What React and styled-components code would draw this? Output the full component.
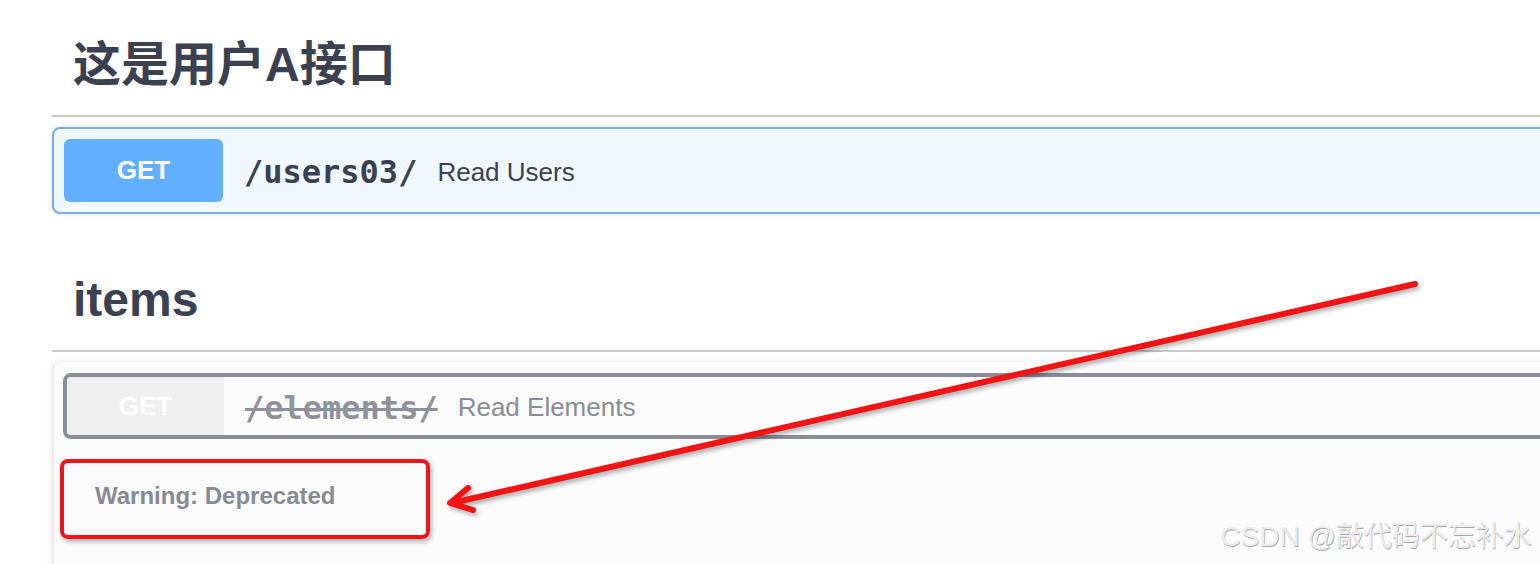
import React from "react";
import styled, { createGlobalStyle } from "styled-components";

const GlobalStyle = createGlobalStyle`
  html, body {
    margin: 0;
    padding: 0;
    background: #fff;
  }
  body {
    overflow: hidden;
    font-family: "Liberation Sans", "Noto Sans CJK SC", sans-serif;
    color: #3b4151;
  }
`;

const Page = styled.div`
  position: relative;
  width: 1540px;
  height: 564px;
  overflow: hidden;
  padding: 16px 0 0 52px;
  box-sizing: border-box;
`;

const Tag = styled.section`
  margin-right: -30px;
  margin-bottom: ${(p) => p.gap || 0}px;
`;

const TagTitle = styled.h3`
  margin: 0 0 10px;
  padding: 20px 40px 21px 21px;
  font-size: 48px;
  line-height: 58px;
  font-weight: 700;
  color: #3b4151;
  border-bottom: 2px solid #c9cacd;
`;

const Opblock = styled.div`
  border: 2px solid #79aee0;
  border-radius: 8px;
  background: #eff7ff;
  box-shadow: 0 0 6px rgba(0, 0, 0, 0.12);
  padding: 10px;
`;

const Summary = styled.div`
  display: flex;
  align-items: center;
`;

const Method = styled.span`
  flex: none;
  display: flex;
  align-items: center;
  justify-content: center;
  width: ${(p) => p.w || 159}px;
  height: ${(p) => p.h || 63}px;
  border-radius: ${(p) => (p.flat ? 0 : 6)}px;
  background: ${(p) => p.bg || "#61affe"};
  color: #fff;
  font-size: 26px;
  font-weight: 700;
`;

const Path = styled.span`
  margin-left: 21px;
  padding-top: 3px;
  font-family: "DejaVu Sans Mono", "Liberation Mono", monospace;
  font-size: 32px;
  font-weight: 700;
  color: ${(p) => p.color || "#3b4151"};
  text-decoration: ${(p) => (p.deprecated ? "line-through" : "none")};
  text-decoration-thickness: 3px;
`;

const Description = styled.span`
  margin-left: 20px;
  padding-top: 3px;
  font-size: 26px;
  color: ${(p) => p.color || "#3b4151"};
`;

const DeprecatedBlock = styled.div`
  border-left: 2px solid #ececec;
  border-radius: 8px 0 0 0;
  background: #fbfbfb;
  box-shadow: 0 0 6px rgba(0, 0, 0, 0.1);
  padding: 11px 0 40px 0;
`;

const DeprecatedSummary = styled.div`
  display: flex;
  align-items: center;
  height: 66px;
  box-sizing: border-box;
  margin-left: 9px;
  border: 4px solid #8a8c96;
  border-radius: 8px;
  background: #fcfcfc;
  overflow: hidden;
`;

const DeprecatedBody = styled.div`
  padding: 20px 0 0 6px;
`;

const WarningBox = styled.div`
  display: flex;
  align-items: center;
  box-sizing: border-box;
  width: 370px;
  height: 80px;
  padding: 0 0 6px 31px;
  border: 4px solid #f0141a;
  border-radius: 8px;
  box-shadow: 2px 3px 5px rgba(0, 0, 0, 0.28);
`;

const WarningText = styled.h4`
  margin: 0;
  font-size: 24px;
  font-weight: 700;
  color: #878a93;
`;

const Arrow = styled.svg`
  position: absolute;
  left: 0;
  top: 0;
  pointer-events: none;
  filter: drop-shadow(2px 3px 2px rgba(0, 0, 0, 0.3));
`;

const Watermark = styled.div`
  position: absolute;
  right: 8px;
  bottom: 10px;
  font-size: 28px;
  font-weight: 400;
  color: #ececec;
  text-shadow: 0.6px 0.6px 0 #a9a9a9;
  white-space: nowrap;
`;

const gray = "#898c96";

const App = () => (
  <>
    <GlobalStyle />
    <Page>
      <Tag gap={37}>
        <TagTitle>这是用户A接口</TagTitle>
        <Opblock>
          <Summary>
            <Method>GET</Method>
            <Path>/users03/</Path>
            <Description>Read Users</Description>
          </Summary>
        </Opblock>
      </Tag>

      <Tag>
        <TagTitle>items</TagTitle>
        <DeprecatedBlock>
          <DeprecatedSummary>
            <Method w={157} h={58} flat bg="#efefef">
              GET
            </Method>
            <Path deprecated color="#8f929b">
              /elements/
            </Path>
            <Description color={gray}>Read Elements</Description>
          </DeprecatedSummary>
          <DeprecatedBody>
            <WarningBox>
              <WarningText>Warning: Deprecated</WarningText>
            </WarningBox>
          </DeprecatedBody>
        </DeprecatedBlock>
      </Tag>

      <Arrow width="1540" height="564" viewBox="0 0 1540 564">
        <g
          fill="none"
          stroke="#f01414"
          strokeWidth="6"
          strokeLinecap="round"
          strokeLinejoin="round"
        >
          <line x1="1415" y1="284" x2="452" y2="503" />
          <polyline points="468,488 450,503 473,510" />
        </g>
      </Arrow>

      <Watermark>CSDN @敲代码不忘补水</Watermark>
    </Page>
  </>
);

export default App;
